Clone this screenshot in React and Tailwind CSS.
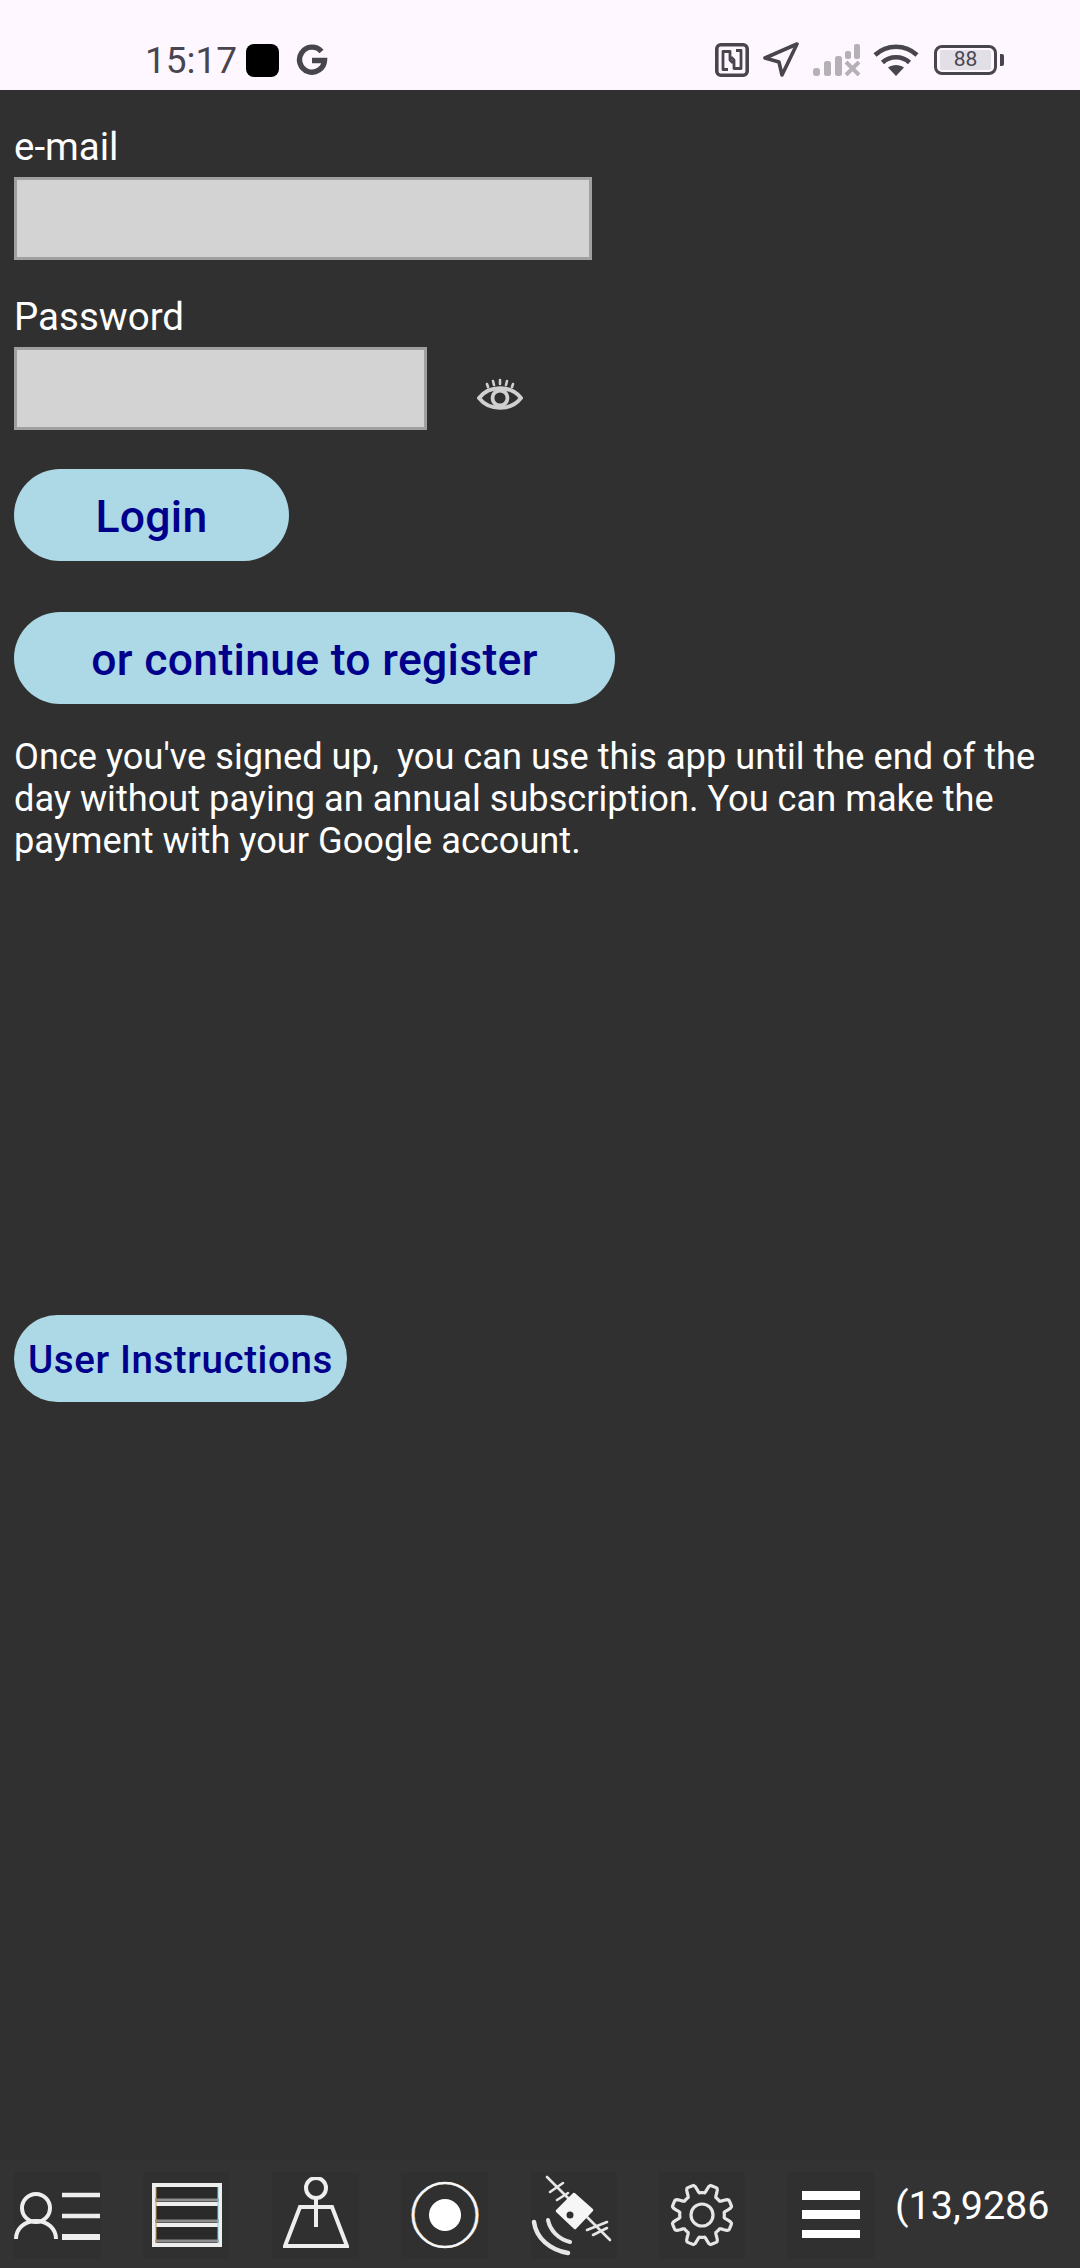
import React from "react";

const R = "font-['Roboto',sans-serif]";
const INK = "#49454f";

function Nfc() {
  return (
    <svg width="34" height="34" viewBox="0 0 34 34" fill="none" stroke={INK} strokeLinejoin="round" className="blur-[0.3px]">
      <rect x="1.800" y="1.800" width="30.400" height="30.400" rx="4" strokeWidth="3.600" />
      <path d="M13 26.500H8V8.500H15V17L18 20" strokeWidth="2.800" />
      <path d="M21 7.500H26V25.500H19V17L16 14" strokeWidth="2.800" />
    </svg>
  );
}
function Nav() {
  return (
    <svg width="38" height="36" viewBox="0 0 38 36" fill="none" stroke={INK} strokeWidth="3.600" strokeLinejoin="round" strokeLinecap="round" className="blur-[0.3px]">
      <path d="M35 2L3 16L17 20L20 33Z" />
    </svg>
  );
}
function Signal() {
  return (
    <svg width="48" height="32" viewBox="0 0 48 32" fill="#b4b0b6" className="blur-[0.3px]">
      <rect x="0" y="24" width="7" height="8" rx="3" />
      <rect x="11" y="17" width="7" height="15" rx="2.500" />
      <rect x="22" y="12" width="7" height="20" rx="2.500" />
      <rect x="32" y="7" width="6" height="8" rx="2" />
      <rect x="41" y="0" width="6" height="15" rx="2" />
      <path d="M33 18L46 31M46 18L33 31" stroke="#b4b0b6" strokeWidth="4" fill="none" />
    </svg>
  );
}
function Wifi() {
  return (
    <svg width="46" height="34" viewBox="0 0 46 34" fill="none" stroke={INK} strokeWidth="4.600" className="blur-[0.3px]">
      <path d="M2 12C14 1 32 1 44 12" />
      <path d="M9.500 19.500C17 12.500 29 12.500 36.500 19.500" />
      <path d="M23 33L15 24.500C19.500 21 26.500 21 31 24.500Z" fill={INK} stroke="none" />
    </svg>
  );
}
function Battery() {
  return (
    <div className="flex items-center gap-[3px]">
      <div className="flex h-[30px] w-[63px] items-center justify-center rounded-[8px] border-[3px] border-[#49454f] px-[3px]">
        <div className="flex h-[20px] w-full items-center justify-center rounded-[2px] bg-[#e3dfe6] text-[21px] text-[#49454f]">88</div>
      </div>
      <div className="h-[12px] w-[4px] rounded-r-[2px] bg-[#49454f]" />
    </div>
  );
}
function G() {
  return (
    <svg width="32" height="32" viewBox="0 0 32 32" fill="none" stroke={INK} strokeWidth="5.400" className="blur-[0.3px]">
      <path d="M25.500 7.500A12.500 12.500 0 1 0 28.500 16.500H16" />
    </svg>
  );
}

function Eye() {
  return (
    <svg width="46" height="36" viewBox="0 0 46 36" fill="none" stroke="#d0d0d0" strokeWidth="2.600" strokeLinecap="round" className="blur-[0.6px]">
      <path d="M2 21C12 8 34 8 44 21C34 34 12 34 2 21Z" strokeWidth="3.800" />
      <circle cx="23" cy="21" r="7.500" strokeWidth="3.800" />
      <path d="M11 10L10 7M17 8L16 4M23 7V3M29 8L30 4M35 10L36 7" />
    </svg>
  );
}

function Person() {
  return (
    <svg width="87" height="87" viewBox="0 0 87 87" fill="none" stroke="#eeeeee" strokeWidth="4" className="blur-[0.6px]">
      <circle cx="22" cy="36" r="14" />
      <path d="M2 67C2 57 10 49 22 49C34 49 42 57 42 67" />
      <path d="M48 23H86M48 44H86" strokeWidth="4.500" />
      <path d="M48 65H86" strokeWidth="6" />
    </svg>
  );
}
function Rows() {
  return (
    <svg width="70" height="64" viewBox="0 0 70 64" fill="none" stroke="#eeeeee" strokeWidth="4" className="blur-[0.6px]">
      <rect x="2" y="2" width="66" height="60" fill="#2a2a2a" />
      <path d="M2 21H68M2 42H68" strokeWidth="4" />
      <path d="M3 17H67M3 38H67M3 58H67" stroke="#8e8e8e" strokeWidth="3" />
      <path d="M4 4V60" stroke="#c89a4a" strokeWidth="1" />
      <path d="M66 4V60" stroke="#7fd0e0" strokeWidth="1" />
    </svg>
  );
}
function Pin() {
  return (
    <svg width="66" height="76" viewBox="0 0 66 76" fill="none" stroke="#eeeeee" strokeWidth="4" className="blur-[0.6px]">
      <circle cx="33" cy="11" r="10" />
      <path d="M33 21V50" />
      <path d="M2 69L17 30H49L64 69Z" />
    </svg>
  );
}
function Target() {
  return (
    <svg width="70" height="70" viewBox="0 0 70 70" fill="none" className="blur-[0.4px]">
      <circle cx="34" cy="35" r="32" stroke="#3f86c8" strokeWidth="2" />
      <circle cx="36" cy="35" r="32" stroke="#d08a3c" strokeWidth="2" />
      <circle cx="35" cy="35" r="32" stroke="#f6f6f6" strokeWidth="2.500" />
      <circle cx="35" cy="35" r="16" fill="#ffffff" />
    </svg>
  );
}
function Sat() {
  return (
    <svg width="87" height="87" viewBox="0 0 87 87" fill="none" stroke="#e6e6e6" strokeWidth="2.600" strokeLinecap="round" className="blur-[0.7px]">
      <path d="M17 5L80 68" />
      <path d="M20 20L33 11M27 28L38 21M57 58L77 50M63 63L77 56" />
      <path d="M44 22L62 38L45 56L27 39Z" fill="#f6f6f6" stroke="#f6f6f6" strokeLinejoin="round" />
      <circle cx="40" cy="43" r="3.500" fill="#303030" stroke="none" />
      <path d="M18 48C20 58 28 67 40 70" strokeWidth="4" />
      <path d="M4 50C6 66 20 78 38 81" strokeWidth="4.500" />
    </svg>
  );
}

const GEAR = (() => {
  const pts = [];
  const n = 160;
  for (let i = 0; i < n; i++) {
    const t = (i / n) * Math.PI * 2;
    const w = Math.max(-1, Math.min(1, 2.200 * Math.cos(8 * t + Math.PI)));
    const r = 26.500 + 4.200 * w;
    pts.push(`${(33 + r * Math.cos(t)).toFixed(2)} ${(33 + r * Math.sin(t)).toFixed(2)}`);
  }
  return `M${pts.join("L")}Z`;
})();

function Gear() {
  return (
    <svg width="66" height="66" viewBox="0 0 66 66" fill="none" stroke="#e6e6e6" strokeWidth="3.200" strokeLinejoin="round" className="blur-[0.6px]">
      <path d={GEAR} />
      <circle cx="33" cy="33" r="11" />
    </svg>
  );
}
function Burger() {
  return (
    <svg width="58" height="48" viewBox="0 0 58 48" fill="#ffffff" className="blur-[0.4px]">
      <rect x="0" y="0" width="58" height="9" />
      <rect x="0" y="19" width="58" height="9" />
      <rect x="0" y="39" width="58" height="8" />
    </svg>
  );
}

function Cell({ children, className = "" }) {
  return <div className={`flex h-[87px] w-[87px] shrink-0 items-center justify-center bg-[#303030] ${className}`}>{children}</div>;
}

function PillButton({ children, className }) {
  return (
    <button className={`block rounded-full bg-[#add8e6] text-center font-medium text-[#00008b] ${className}`}>
      {children}
    </button>
  );
}

export default function App() {
  return (
    <div className={`flex h-[2268px] w-[1080px] flex-col overflow-hidden bg-[#303030] ${R}`}>
      <div className="flex h-[90px] shrink-0 items-center justify-between bg-[#fef7ff] pl-[145px] pr-[76px] pt-[30px]">
        <div className="flex items-center">
          <span className="mt-[2px] text-[37px] leading-[44px] text-[#49454f]">15:17</span>
          <div className="ml-[9px] h-[33px] w-[33px] rounded-[8px] bg-black" />
          <div className="ml-[17px]"><G /></div>
        </div>
        <div className="flex items-center">
          <Nfc />
          <div className="ml-[13px]"><Nav /></div>
          <div className="ml-[13px]"><Signal /></div>
          <div className="ml-[12px]"><Wifi /></div>
          <div className="ml-[15px]"><Battery /></div>
        </div>
      </div>

      <div className="flex flex-1 flex-col pl-[14px]">
        <label className="mt-[36px] text-[38.500px] leading-[42px] text-white">e-mail</label>
        <div className="mt-[9px] h-[83px] w-[578px] border-[3px] border-[#a0a0a0] bg-[#d3d3d3]" />
        <label className="mt-[36px] text-[38.500px] leading-[42px] text-white">Password</label>
        <div className="mt-[9px] flex items-center">
          <div className="h-[83px] w-[413px] border-[3px] border-[#a0a0a0] bg-[#d3d3d3]" />
          <div className="ml-[50px] mt-[12px]"><Eye /></div>
        </div>
        <PillButton className="mt-[39px] h-[92px] w-[275px] pt-[4px] text-[44.500px] tracking-[0.3px]">Login</PillButton>
        <PillButton className="mt-[51px] h-[92px] w-[601px] pt-[4px] text-[44.500px] tracking-[0.3px]">or continue to register</PillButton>
        <p className="mt-[32px] w-[1050px] text-[36.200px] leading-[42px] text-white">
          Once you've signed up,&nbsp; you can use this app until the end of the day without paying an annual subscription. You can make the payment with your Google account.
        </p>
        <PillButton className="mt-[453px] h-[87px] w-[333px] pt-[2px] text-[38.500px] tracking-[0.6px]">User Instructions</PillButton>
      </div>

      <div className="flex h-[108px] shrink-0 items-center bg-[#333333] pl-[14px] pt-[2px]">
        <Cell><Person /></Cell>
        <Cell className="ml-[42px]"><Rows /></Cell>
        <Cell className="ml-[42px]"><Pin /></Cell>
        <Cell className="ml-[42px]"><Target /></Cell>
        <Cell className="ml-[42px]"><Sat /></Cell>
        <Cell className="ml-[41px]"><Gear /></Cell>
        <Cell className="ml-[42px]"><Burger /></Cell>
        <span className="mb-[18px] ml-[21px] whitespace-nowrap text-[39.500px] leading-[46px] text-white">(13,9286</span>
      </div>
    </div>
  );
}
